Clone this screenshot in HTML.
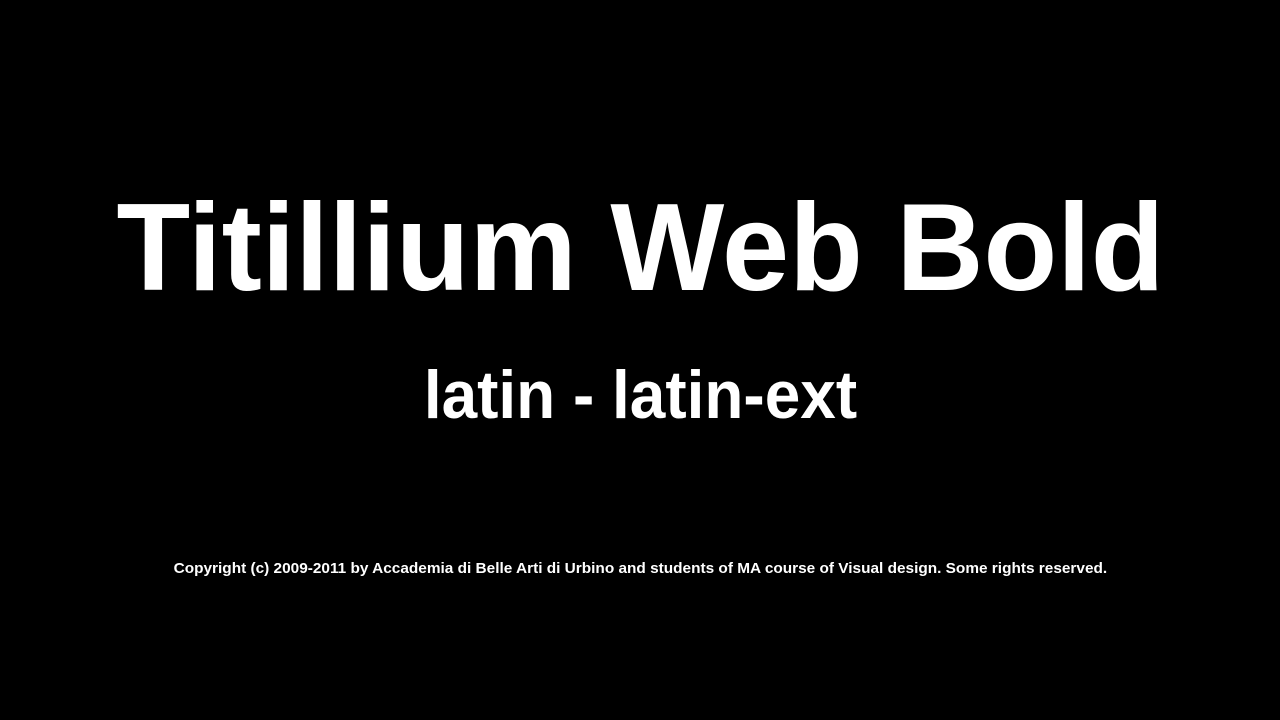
<!DOCTYPE html>
<html><head><meta charset="utf-8"><style>
html,body{margin:0;padding:0;background:#000;width:1280px;height:720px;overflow:hidden}
.t{position:absolute;left:0;width:1280px;text-align:center;color:#fff;font-family:"Liberation Sans",sans-serif;font-weight:bold;white-space:nowrap}
.t span{display:inline-block}
</style></head><body>
<div class="t" style="top:186px;font-size:124px;line-height:124px"><span style="transform:scaleX(0.973)">Titillium Web Bold</span></div>
<div class="t" style="top:361px;font-size:68px;line-height:68px"><span style="transform:scaleX(0.94)">latin - latin-ext</span></div>
<div class="t" style="top:561px;font-size:15px;line-height:15px"><span style="transform:scaleX(1.025)">Copyright (c) 2009-2011 by Accademia di Belle Arti di Urbino and students of MA course of Visual design. Some rights reserved.</span></div>
</body></html>
